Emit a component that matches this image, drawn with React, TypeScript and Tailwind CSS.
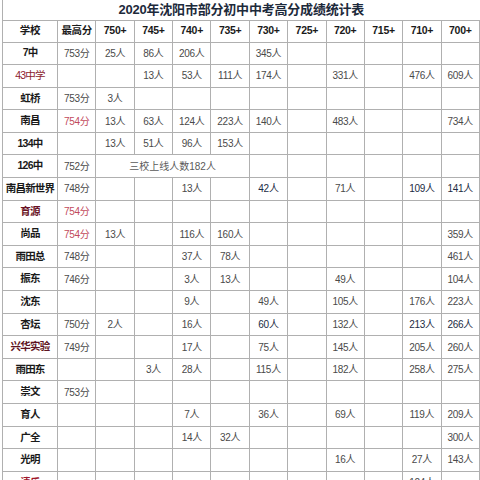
import React from "react";

type Row = {
  name: string;
  nameClass?: string;
  cells: string[];
  merged?: string;
};

const headers = ["学校", "最高分", "750+", "745+", "740+", "735+", "730+", "725+", "720+", "715+", "710+", "700+"];

// "*" marks the darker figures, "!" the red top scores
const rows: Row[] = [
  { name: "7中", cells: ["753分", "25人", "86人", "206人", "", "345人", "", "", "", "", ""] },
  { name: "43中学", nameClass: "font-normal text-[#8c1c2c]", cells: ["", "", "13人", "53人", "111人", "174人", "", "331人", "", "476人", "609人"] },
  { name: "虹桥", cells: ["753分", "3人", "", "", "", "", "", "", "", "", ""] },
  { name: "南昌", cells: ["!754分", "13人", "63人", "124人", "223人", "140人", "", "483人", "", "", "734人"] },
  { name: "134中", cells: ["", "13人", "51人", "96人", "153人", "", "", "", "", "", ""] },
  { name: "126中", cells: ["752分", "", "", "", "", "", "", ""], merged: "三校上线人数182人" },
  { name: "南昌新世界", cells: ["748分", "", "", "13人", "", "*42人", "", "71人", "", "*109人", "*141人"] },
  { name: "育源", nameClass: "font-bold text-[#6a1426]", cells: ["!754分", "", "", "", "", "", "", "", "", "", ""] },
  { name: "尚品", cells: ["!754分", "13人", "", "116人", "160人", "", "", "", "", "", "359人"] },
  { name: "雨田总", cells: ["748分", "", "", "37人", "78人", "", "", "", "", "", "461人"] },
  { name: "振东", cells: ["746分", "", "", "3人", "13人", "", "", "49人", "", "", "104人"] },
  { name: "沈东", cells: ["", "", "", "9人", "", "49人", "", "105人", "", "176人", "223人"] },
  { name: "杏坛", cells: ["750分", "2人", "", "16人", "", "*60人", "", "132人", "", "*213人", "*266人"] },
  { name: "兴华实验", nameClass: "font-bold text-[#5e1422]", cells: ["749分", "", "", "17人", "", "75人", "", "145人", "", "205人", "260人"] },
  { name: "雨田东", cells: ["", "", "3人", "28人", "", "115人", "", "182人", "", "258人", "275人"] },
  { name: "崇文", cells: ["753分", "", "", "", "", "", "", "", "", "", ""] },
  { name: "育人", cells: ["", "", "", "7人", "", "36人", "", "69人", "", "119人", "209人"] },
  { name: "广全", cells: ["", "", "", "14人", "32人", "", "", "", "", "", "300人"] },
  { name: "光明", cells: ["", "", "", "", "", "", "", "16人", "", "27人", "143人"] },
  { name: "清乐", nameClass: "font-bold text-[#a0182c]", cells: ["", "", "", "", "", "", "", "", "", "124人", ""] },
];

function Cell({ value }: { value: string }) {
  let text = value;
  let cls = "text-[#4a4a4a]";
  if (value.startsWith("!")) {
    text = value.slice(1);
    cls = "text-[#c24a5c]";
  } else if (value.startsWith("*")) {
    text = value.slice(1);
    cls = "text-[#1c2c44]";
  }
  return (
    <td className={`border border-[#b0b0b0] text-center text-[10px] tracking-[-0.3px] ${cls}`}>{text}</td>
  );
}

export default function App() {
  return (
    <div
      className="w-[480px] h-[480px] overflow-hidden bg-white pl-[2px]"
      style={{ fontFamily: '"Liberation Sans", "Noto Sans CJK SC", sans-serif' }}
    >
      <table className="w-[478px] table-fixed border-collapse">
        <colgroup>
          <col className="w-[55px]" />
          {headers.slice(1).map((h) => (
            <col key={h} />
          ))}
        </colgroup>
        <thead>
          <tr className="h-[20px]">
            <th
              colSpan={12}
              className="border-l border-b border-[#b0b0b0] text-center text-[13px] font-bold text-[#1d2a3b] tracking-[-0.2px]"
            >
              2020年沈阳市部分初中中考高分成绩统计表
            </th>
          </tr>
          <tr className="h-[22px]">
            {headers.map((h) => (
              <th key={h} className="border border-[#b0b0b0] text-center text-[10.5px] font-bold text-[#1a1a1a] tracking-[-0.3px]">
                {h}
              </th>
            ))}
          </tr>
        </thead>
        <tbody>
          {rows.map((row) => (
            <tr key={row.name} className="h-[22.6px]">
              <td
                className={`border border-[#b0b0b0] text-center text-[10.5px] tracking-[-0.8px] ${
                  row.nameClass ?? "font-bold text-[#1a1a1a]"
                }`}
              >
                {row.name}
              </td>
              {row.merged ? (
                <>
                  <Cell value={row.cells[0]} />
                  <td colSpan={4} className="border border-[#b0b0b0] text-center text-[10px] text-[#5a5a5a]">
                    {row.merged}
                  </td>
                  {row.cells.slice(2).map((c, i) => (
                    <Cell key={i} value={c} />
                  ))}
                </>
              ) : (
                row.cells.map((c, i) => <Cell key={i} value={c} />)
              )}
            </tr>
          ))}
        </tbody>
      </table>
    </div>
  );
}
